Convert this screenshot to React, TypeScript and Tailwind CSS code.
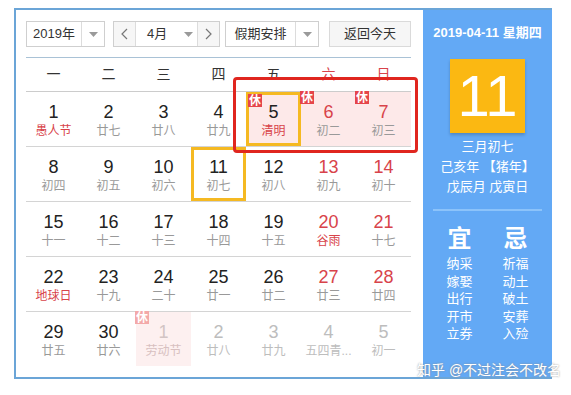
import React from 'react';

type Day = {
  n: number;
  l: string;
  fest?: boolean; // 节日/节气，农历行标红
  off?: boolean; // 休
  other?: boolean; // 非本月
  sel?: boolean; // 选中
  hover?: boolean; // 悬停框
};

// 2019年4月
const weeks: Day[][] = [
  [
    { n: 1, l: '愚人节', fest: true },
    { n: 2, l: '廿七' },
    { n: 3, l: '廿八' },
    { n: 4, l: '廿九' },
    { n: 5, l: '清明', fest: true, off: true, hover: true },
    { n: 6, l: '初二', off: true },
    { n: 7, l: '初三', off: true },
  ],
  [
    { n: 8, l: '初四' },
    { n: 9, l: '初五' },
    { n: 10, l: '初六' },
    { n: 11, l: '初七', sel: true },
    { n: 12, l: '初八' },
    { n: 13, l: '初九' },
    { n: 14, l: '初十' },
  ],
  [
    { n: 15, l: '十一' },
    { n: 16, l: '十二' },
    { n: 17, l: '十三' },
    { n: 18, l: '十四' },
    { n: 19, l: '十五' },
    { n: 20, l: '谷雨', fest: true },
    { n: 21, l: '十七' },
  ],
  [
    { n: 22, l: '地球日', fest: true },
    { n: 23, l: '十九' },
    { n: 24, l: '二十' },
    { n: 25, l: '廿一' },
    { n: 26, l: '廿二' },
    { n: 27, l: '廿三' },
    { n: 28, l: '廿四' },
  ],
  [
    { n: 29, l: '廿五' },
    { n: 30, l: '廿六' },
    { n: 1, l: '劳动节', other: true, off: true },
    { n: 2, l: '廿八', other: true },
    { n: 3, l: '廿九', other: true },
    { n: 4, l: '五四青...', other: true },
    { n: 5, l: '初一', other: true },
  ],
];

const weekNames = ['一', '二', '三', '四', '五', '六', '日'];
const yi = ['纳采', '嫁娶', '出行', '开市', '立券'];
const ji = ['祈福', '动土', '破土', '安葬', '入殓'];

function Caret() {
  return (
    <svg width="9" height="5" viewBox="0 0 9 5">
      <path d="M0 0 H9 L4.5 5 Z" fill="#9a9a9a" />
    </svg>
  );
}

function Chevron({ dir }: { dir: 'l' | 'r' }) {
  return (
    <svg width="7" height="12" viewBox="0 0 7 12">
      <path
        d={dir === 'l' ? 'M6 1 L1 6 L6 11' : 'M1 1 L6 6 L1 11'}
        fill="none"
        stroke="#777"
        strokeWidth="1.2"
      />
    </svg>
  );
}

function Cell({ d, col }: { d: Day; col: number }) {
  const weekend = col >= 5;
  const numColor = d.other
    ? d.off
      ? 'text-[#d2c4c4]'
      : 'text-[#bdbdbd]'
    : weekend
    ? 'text-[#d8434a]'
    : 'text-[#222]';
  const lunarColor = d.other
    ? d.off
      ? 'text-[#d8c0c0]'
      : 'text-[#bdbdbd]'
    : d.fest
    ? 'text-[#d8434a]'
    : 'text-[#999]';
  const bg = d.off ? (d.other ? 'bg-[#fdf0f0]' : 'bg-[#fde9e9]') : '';
  const border = d.hover || d.sel ? 'border-[3px] border-[#f5b922] pt-[7px]' : 'pt-[10px]';

  return (
    <div className={`relative w-[55px] h-[54px] flex flex-col items-center ${bg} ${border}`}>
      {d.off && (
        <span
          className={`absolute -top-px -left-px w-[14px] h-[13px] flex items-center justify-center text-[12px] leading-none font-bold text-white ${
            d.other ? 'bg-[#f3a9a9]' : 'bg-[#e5454a]'
          }`}
        >
          休
        </span>
      )}
      <span className={`text-[18px] leading-[20px] ${numColor}`}>{d.n}</span>
      <span className={`mt-[1px] text-[12px] leading-[16px] whitespace-nowrap ${lunarColor}`}>{d.l}</span>
    </div>
  );
}

export default function App() {
  return (
    <div className="relative w-[571px] h-[395px] bg-white overflow-hidden font-['Liberation_Sans','Noto_Sans_CJK_SC',sans-serif]">
      <div className="ml-[14px] mt-[8px] w-[538px] h-[371px] flex border-l-2 border-t-2 border-b-2 border-[#6ba5d7]">
        {/* 日历主体 */}
        <div className="w-[407px] pt-[11px] pl-[10px] pr-[12px]">
          <div className="flex h-[26px] text-[13px] text-[#333]">
            <div className="w-[79px] flex border border-[#cfcfcf] bg-white">
              <div className="flex-1 flex items-center justify-center">2019年</div>
              <div className="w-[23px] border-l border-[#dcdcdc] flex items-center justify-center">
                <Caret />
              </div>
            </div>
            <div className="ml-[8px] w-[107px] flex border border-[#cfcfcf]">
              <div className="w-[22px] bg-[#f6f6f6] flex items-center justify-center border-r border-[#dcdcdc]">
                <Chevron dir="l" />
              </div>
              <div className="flex-1 flex items-center pl-[11px] gap-[17px]">
                <span>4月</span>
                <Caret />
              </div>
              <div className="w-[22px] bg-[#f6f6f6] flex items-center justify-center border-l border-[#dcdcdc]">
                <Chevron dir="r" />
              </div>
            </div>
            <div className="ml-[5px] w-[94px] flex border border-[#cfcfcf]">
              <div className="flex-1 flex items-center justify-center">假期安排</div>
              <div className="w-[23px] border-l border-[#dcdcdc] flex items-center justify-center">
                <Caret />
              </div>
            </div>
            <div className="ml-[10px] w-[82px] flex items-center justify-center border border-[#dadada] bg-[#f6f6f6]">
              返回今天
            </div>
          </div>

          <div className="mt-[10px] h-px bg-[#a9c2d6]" />

          <div className="flex h-[34px] border-b border-[#cccccc]">
            {weekNames.map((w, i) => (
              <div
                key={w}
                className={`w-[55px] flex items-center justify-center text-[14px] ${
                  i >= 5 ? 'text-[#d8434a]' : 'text-[#333]'
                }`}
              >
                {w}
              </div>
            ))}
          </div>

          {weeks.map((row, r) => (
            <div key={r} className={`flex ${r < weeks.length - 1 ? 'border-b border-[#d4d4d4]' : ''}`}>
              {row.map((d, c) => (
                <Cell key={c} d={d} col={c} />
              ))}
            </div>
          ))}
        </div>

        {/* 右侧详情 */}
        <div className="w-[129px] bg-[#63a9f5] text-white flex flex-col items-center">
          <div className="mt-[14px] text-[13px] leading-[18px] font-bold whitespace-nowrap">2019-04-11 星期四</div>
          <div className="mt-[17px] w-[75px] h-[74px] bg-[#fbb812] shadow-[0_2px_3px_rgba(0,0,0,0.2)] flex items-center justify-center text-[58px] leading-none">
            11
          </div>
          <div className="mt-[4px] text-[13px] leading-[20px] text-center">
            <div>三月初七</div>
            <div>己亥年 【猪年】</div>
            <div>戊辰月 戊寅日</div>
          </div>
          <div className="mt-[12px] self-stretch mx-[10px] h-[2px] bg-[#8cc3fa]" />
          <div className="mt-[14px] flex gap-[16px]">
            <div className="w-[40px] flex flex-col items-center">
              <div className="text-[24px] leading-[28px] font-bold">宜</div>
              <div className="mt-[2px] text-[13px] leading-[17.5px] text-center">
                {yi.map(t => (
                  <div key={t}>{t}</div>
                ))}
              </div>
            </div>
            <div className="w-[40px] flex flex-col items-center">
              <div className="text-[24px] leading-[28px] font-bold">忌</div>
              <div className="mt-[2px] text-[13px] leading-[17.5px] text-center">
                {ji.map(t => (
                  <div key={t}>{t}</div>
                ))}
              </div>
            </div>
          </div>
        </div>
      </div>

      {/* 标注框 */}
      <div className="absolute left-[233px] top-[77px] w-[185px] h-[76px] border-[3px] border-[#e0261f] rounded-[4px]" />

      {/* 水印 */}
      <div className="absolute left-[417px] top-[361px] text-[14px] leading-[18px] text-white whitespace-nowrap [text-shadow:0_0_2px_#8a8a8a]">
        知乎 @不过注会不改名
      </div>
    </div>
  );
}
